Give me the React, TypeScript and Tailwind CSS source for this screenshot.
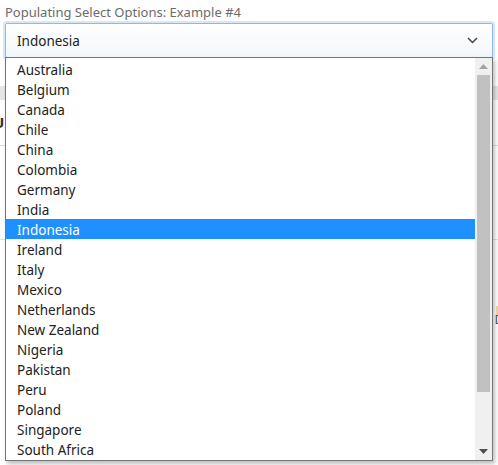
import React from 'react';

const countries = [
  'Australia', 'Belgium', 'Canada', 'Chile', 'China', 'Colombia', 'Germany', 'India',
  'Indonesia', 'Ireland', 'Italy', 'Mexico', 'Netherlands', 'New Zealand', 'Nigeria',
  'Pakistan', 'Peru', 'Poland', 'Singapore', 'South Africa',
];

const font = { fontFamily: '"Noto Sans", "Open Sans", sans-serif' };

const App = () => {
  const selected = 'Indonesia';

  return (
    <div className="relative w-[498px] h-[465px] overflow-hidden bg-white" style={font}>
      {/* page behind the open dropdown */}
      <div className="flex flex-col">
        <div className="h-[86px]" />
        <div className="h-[14px] bg-[#e6e6e6]" />
        <div className="h-[46px] flex items-center border-b border-[#dcdcdc]">
          <span className="ml-[-7px] text-[15px] font-bold text-[#333]">U</span>
        </div>
        <div className="h-[94px] border-b border-[#e3e3e3]" />
        <div className="h-[70px] flex justify-end items-start">
          <div className="mr-[-2px] mt-[66px] w-[4px] h-[10px] bg-[#f5d9a8]" />
        </div>
        <div className="flex justify-end">
          <span className="mr-[-6px] text-[13px] text-[#555]">D</span>
        </div>
        <div className="flex-1 bg-[#f7f7f7]" />
      </div>

      {/* the form with its open select */}
      <div className="absolute inset-0 px-[5px] pt-[3px]">
        <label className="block text-[13px] leading-[18px] text-[#6b6b6b]">
          Populating Select Options: Example #4
        </label>
        <div className="mt-[2px] h-[35px] flex items-center justify-between border border-[#8cb8ec] rounded-[2px] bg-gradient-to-b from-white to-[#f3f6f9] shadow-[0_0_0_2px_rgba(140,185,240,0.35)] pl-[11px] pr-[14px]">
          <span className="text-[13.5px] text-[#222] pt-[1px]">{selected}</span>
          <svg width="11" height="7" viewBox="0 0 11 7">
            <path d="M1 1 L5.5 5.5 L10 1" fill="none" stroke="#444" strokeWidth="1.5" />
          </svg>
        </div>

        <div className="absolute left-[5px] top-[57px] w-[488px] h-[404px] flex border border-[#767676] bg-white shadow-[2px_3px_4px_rgba(0,0,0,0.25)]">
          <ul className="flex-1 flex flex-col pt-[1px]">
            {countries.map((c) => (
              <li
                key={c}
                className={
                  c === selected
                    ? 'h-[20px] flex items-center pl-[11px] pt-[2px] text-[13.5px] bg-[#1e90ff] text-white'
                    : 'h-[20px] flex items-center pl-[11px] pt-[2px] text-[13.5px] text-[#222]'
                }
              >
                {c}
              </li>
            ))}
          </ul>
          <div className="w-[17px] flex flex-col items-center bg-[#f0f0f0]">
            <div className="h-[17px] flex items-center justify-center">
              <svg width="9" height="5" viewBox="0 0 9 5">
                <path d="M0 5 L4.5 0 L9 5 Z" fill="#a3a3a3" />
              </svg>
            </div>
            <div className="w-[13px] h-[317px] bg-[#c1c1c1]" />
            <div className="flex-1" />
            <div className="h-[17px] flex items-center justify-center">
              <svg width="9" height="5" viewBox="0 0 9 5">
                <path d="M0 0 L4.5 5 L9 0 Z" fill="#505050" />
              </svg>
            </div>
          </div>
        </div>
      </div>
    </div>
  );
};

export default App;
